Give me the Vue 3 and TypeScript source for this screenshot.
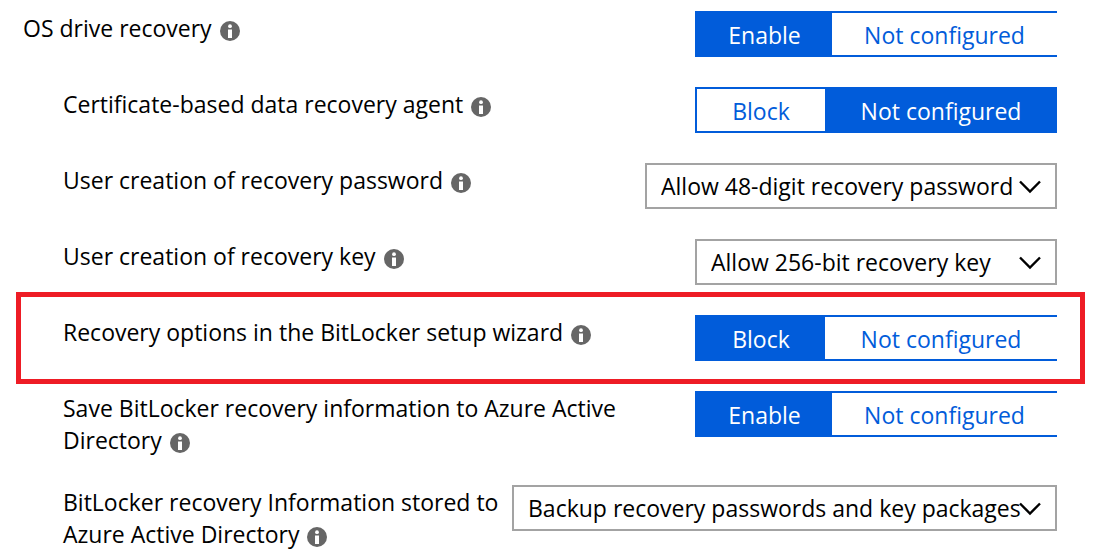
<script setup lang="ts">
import { ref } from 'vue'

interface Setting {
  id: string
  label: string
  root?: boolean
  highlighted?: boolean
  kind: 'toggle' | 'select'
  size: string
  options: string[]
  value: string
}

const settings = ref<Setting[]>([
  { id: 'os-recovery', label: 'OS drive recovery', root: true, kind: 'toggle', size: 'enable', options: ['Enable', 'Not configured'], value: 'Enable' },
  { id: 'agent', label: 'Certificate-based data recovery agent', kind: 'toggle', size: 'block', options: ['Block', 'Not configured'], value: 'Not configured' },
  { id: 'password', label: 'User creation of recovery password', kind: 'select', size: 'medium', options: ['Allow 48-digit recovery password'], value: 'Allow 48-digit recovery password' },
  { id: 'key', label: 'User creation of recovery key', kind: 'select', size: 'small', options: ['Allow 256-bit recovery key'], value: 'Allow 256-bit recovery key' },
  { id: 'wizard', label: 'Recovery options in the BitLocker setup wizard', highlighted: true, kind: 'toggle', size: 'block', options: ['Block', 'Not configured'], value: 'Block' },
  { id: 'save', label: 'Save BitLocker recovery information to Azure Active Directory', kind: 'toggle', size: 'enable', options: ['Enable', 'Not configured'], value: 'Enable' },
  { id: 'stored', label: 'BitLocker recovery Information stored to Azure Active Directory', kind: 'select', size: 'large', options: ['Backup recovery passwords and key packages'], value: 'Backup recovery passwords and key packages' },
])
</script>

<template>
  <main class="settings">
    <div
      v-for="item in settings"
      :key="item.id"
      class="row"
      :class="{ root: item.root, highlighted: item.highlighted }"
    >
      <div class="caption">
        <label v-if="item.kind === 'select'" :for="item.id">{{ item.label }}</label>
        <span v-else :id="item.id">{{ item.label }}</span>
        <svg class="info" viewBox="0 0 20 20" aria-hidden="true">
          <circle cx="10" cy="10" r="10" fill="#666" />
          <circle cx="10" cy="5.2" r="1.9" fill="#fff" />
          <path d="M8 8.5h4V17H8z" fill="#fff" />
        </svg>
      </div>

      <div v-if="item.kind === 'toggle'" class="toggle" :class="item.size" role="group" :aria-labelledby="item.id">
        <button
          v-for="option in item.options"
          :key="option"
          type="button"
          :class="{ active: item.value === option }"
          :aria-pressed="item.value === option"
          @click="item.value = option"
        >{{ option }}</button>
      </div>

      <div v-else class="dropdown" :class="item.size">
        <select :id="item.id" v-model="item.value">
          <option v-for="option in item.options" :key="option">{{ option }}</option>
        </select>
        <svg class="chevron" viewBox="0 0 22 14" aria-hidden="true">
          <path d="M1 1.5 11 11.5 21 1.5" fill="none" stroke="#000" stroke-width="2.4" />
        </svg>
      </div>
    </div>
  </main>
</template>

<style>
body {
  margin: 0;
  background: #fff;
}
</style>

<style scoped>
.settings {
  display: flex;
  flex-direction: column;
  gap: 30px;
  padding: 11px 37px 8px 23px;
  color: #000;
  font: 23px/32px "Open Sans", "Noto Sans", sans-serif;
}

.row {
  position: relative;
  display: flex;
  align-items: flex-start;
  gap: 8px;
  padding-left: 40px;
}

.row.root {
  padding-left: 0;
}

.row.highlighted::after {
  content: "";
  position: absolute;
  inset: -23px -28px -23px -7px;
  border: 5px solid #ee1c25;
  pointer-events: none;
}

.caption {
  flex: 1;
  min-width: 0;
  margin: 1px 0 -1px;
}

.info {
  width: 20px;
  height: 20px;
  margin-left: 8px;
  vertical-align: -4px;
}

.toggle {
  display: flex;
  flex: none;
  width: 362px;
  height: 46px;
}

.toggle button {
  flex: 1;
  padding: 2px 0 0;
  border: 2px solid #015cda;
  border-right-width: 0;
  border-radius: 0;
  background: #fff;
  color: #015cda;
  font: inherit;
  white-space: nowrap;
  cursor: pointer;
}

.toggle button + button {
  border-left-width: 0;
}

.toggle button.active {
  background: #015cda;
  color: #fff;
}

.toggle.enable button:first-child {
  flex: 0 0 137px;
}

.toggle.block button:first-child {
  flex: 0 0 130px;
}

.dropdown {
  position: relative;
  flex: none;
  height: 46px;
}

.dropdown.small {
  width: 362px;
}

.dropdown.medium {
  width: 412px;
}

.dropdown.large {
  width: 545px;
}

.dropdown select {
  width: 100%;
  height: 100%;
  padding: 0 0 0 14px;
  border: 2px solid #a3a3a3;
  border-radius: 0;
  background: #fff;
  color: #000;
  font: inherit;
  appearance: none;
}

.chevron {
  position: absolute;
  top: 17px;
  right: 16px;
  width: 22px;
  height: 14px;
  pointer-events: none;
}
</style>
